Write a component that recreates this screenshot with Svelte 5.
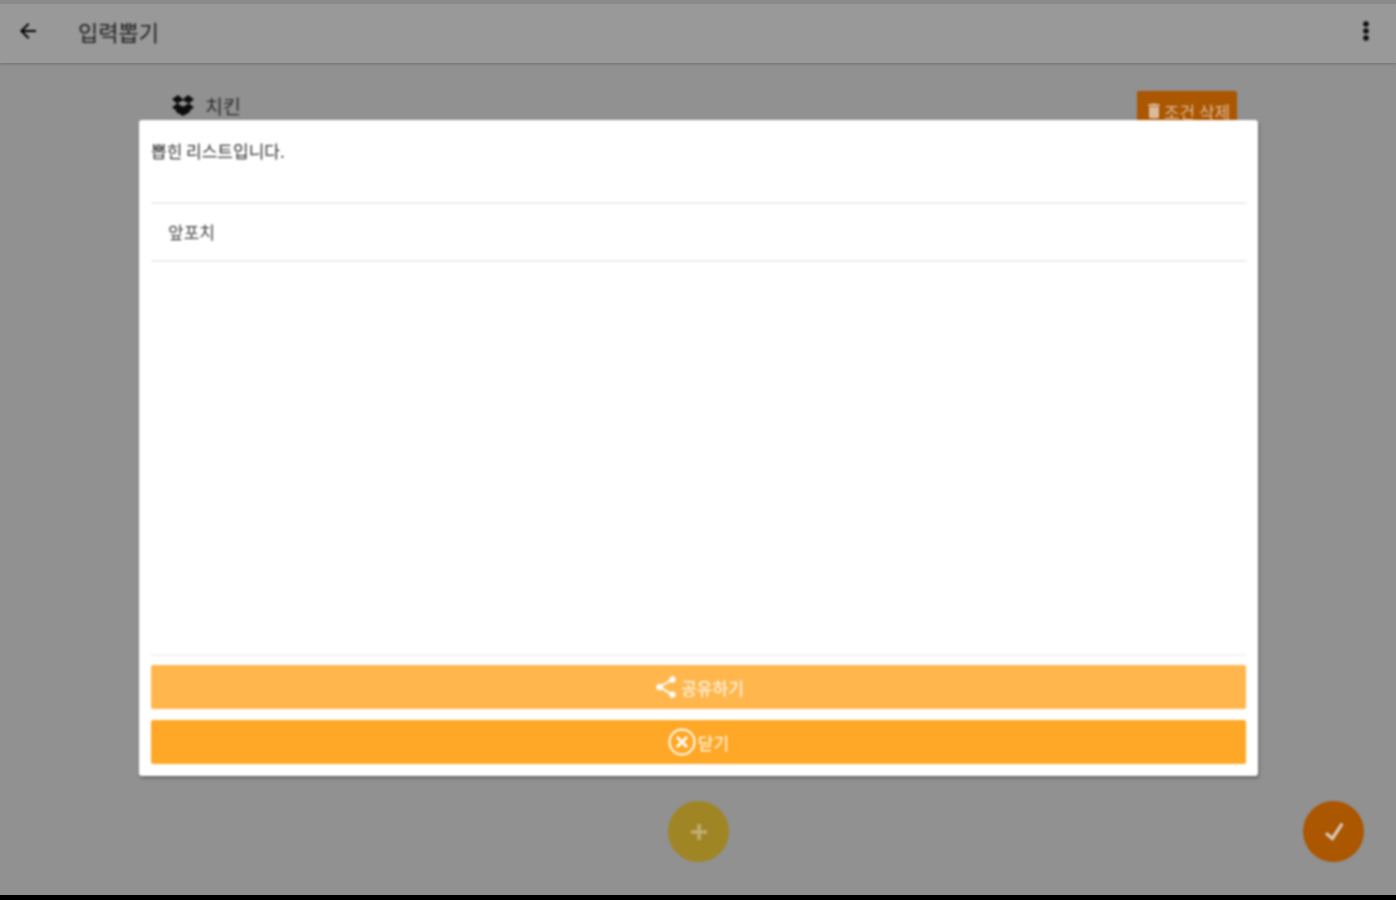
<script>
  const picked = ['앞포치'];
</script>

<div class="page">
  <header class="appbar">
    <svg class="back" viewBox="0 0 24 24" width="24" height="24"><path d="M20 11H7.800l5.600-5.600L12 4l-8 8 8 8 1.400-1.400L7.800 13H20z" /></svg>
    <h1>입력뽑기</h1>
    <svg class="more" viewBox="0 0 24 24" width="24" height="24"><circle cx="12" cy="5" r="2.800" /><circle cx="12" cy="12" r="2.800" /><circle cx="12" cy="19" r="2.800" /></svg>
  </header>

  <main class="content">
    <div class="row">
      <div class="title">
        <svg viewBox="0 0 24 24" width="24" height="24"><path d="M7 2 1 6.200l5 4.200-5 4.200 4 2.600v1.800l7 4 7-4v-1.800l4-2.600-5-4.200 5-4.200L17 2l-5 4.200zM12 7.200l5.500 3.200-5.500 3.400-5.500-3.400z" fill-rule="evenodd" /></svg>
        <span>치킨</span>
      </div>
      <button class="delete">
        <svg viewBox="0 0 24 24" width="20" height="20"><path d="M6 19a2 2 0 0 0 2 2h8a2 2 0 0 0 2-2V7H6zM19 4h-3.500l-1-1h-5l-1 1H5v2h14z" /></svg>
        조건 삭제
      </button>
    </div>

    <button class="fab add" aria-label="추가">
      <svg viewBox="0 0 16 16" width="16" height="16"><path d="M6.200 0h3.600v6.200H16v3.600H9.800V16H6.200V9.800H0V6.200h6.200z" /></svg>
    </button>
    <button class="fab done" aria-label="완료">
      <svg viewBox="0 0 20 20" width="20" height="20"><path d="M17 0.500 19.500 2.500 8.800 19 1 12.500 3 10 8 14z" /></svg>
    </button>

    <section class="dialog">
      <p class="message">뽑힌 리스트입니다.</p>
      <ul>
        {#each picked as item}
          <li>{item}</li>
        {/each}
      </ul>
      <div class="actions">
        <button class="action share">
          <svg viewBox="0 0 24 24" width="26" height="26"><path d="M18 16.100c-.8 0-1.500.3-2 .8l-7.100-4.200c.1-.2.100-.5.100-.7s0-.5-.1-.7L16 7.200c.5.500 1.200.8 2 .8 1.700 0 3-1.300 3-3s-1.300-3-3-3-3 1.300-3 3c0 .2 0 .5.100.7L8 9.800C7.500 9.300 6.800 9 6 9c-1.700 0-3 1.300-3 3s1.300 3 3 3c.8 0 1.500-.3 2-.8l7.100 4.200c-.1.200-.1.400-.1.600 0 1.600 1.300 2.900 3 2.900s3-1.300 3-2.900-1.300-2.900-3-2.900z" /></svg>
          공유하기
        </button>
        <button class="action close">
          <svg viewBox="0 0 28 28" width="28" height="28" fill="none" stroke="#fff"><circle cx="14" cy="14" r="12.500" stroke-width="2" /><path d="m9 9 10 10m0-10L9 19" stroke-width="2.800" /></svg>
          닫기
        </button>
      </div>
    </section>
  </main>

  <div class="navbar"></div>
</div>

<style>
  :global(body) {
    margin: 0;
    background: #000;
  }

  .page {
    display: flex;
    flex-direction: column;
    height: 900px;
    font-family: "Noto Sans CJK KR", "Noto Sans", sans-serif;
    overflow: hidden;
  }

  /* the reference is a soft upscaled capture */
  .appbar > *,
  .row,
  .fab,
  .dialog {
    filter: blur(0.8px);
  }

  .appbar {
    display: flex;
    align-items: center;
    height: 54px;
    flex: none;
    padding: 0 18px 5px 16px;
    background: #999;
    border-top: 4px solid #8a8a8a;
    box-shadow: 0 1px 3px #6f6f6f;
    position: relative;
    z-index: 1;
  }

  .appbar h1 {
    margin: 0 0 0 38px;
    font-size: 22px;
    font-weight: 400;
    color: #222;
  }

  .more {
    margin-left: auto;
    fill: #0d0d0d;
  }

  .content {
    flex: 1;
    position: relative;
    background: #919191;
  }

  .row {
    display: flex;
    justify-content: space-between;
    padding: 28px 159px 0 171px;
  }

  .title {
    display: flex;
    align-items: center;
    align-self: flex-start;
    gap: 10px;
    height: 28px;
    font-size: 19.500px;
    color: #2c2c2c;
  }

  .title svg {
    fill: #0d0d0d;
  }

  .delete {
    display: flex;
    align-items: center;
    justify-content: center;
    width: 100px;
    height: 48px;
    border: 0;
    border-radius: 2px;
    padding: 0 0 8px;
    background: #ab5600;
    color: #dcbb9c;
    font: inherit;
    font-size: 17px;
  }

  .delete svg {
    fill: #dcbb9c;
  }

  .fab {
    position: absolute;
    bottom: 33px;
    width: 61px;
    height: 61px;
    border: 0;
    border-radius: 50%;
    padding: 0;
    display: flex;
    align-items: center;
    justify-content: center;
  }

  .add {
    left: 668px;
    background: #a08524;
    fill: #bfae72;
  }

  .done {
    right: 32px;
    background: #ab5600;
    fill: #d9c9bb;
  }

  .dialog {
    position: absolute;
    left: 139px;
    top: 57px;
    width: 1119px;
    height: 656px;
    box-sizing: border-box;
    padding: 12px;
    display: flex;
    flex-direction: column;
    background: #fff;
    border-radius: 3px;
    box-shadow: 1px 2px 3px #5f5f5f;
  }

  .message {
    margin: 0;
    height: 70px;
    border-bottom: 2px solid #eee;
    font-size: 17px;
    line-height: 38px;
    color: #333;
  }

  ul {
    flex: 1;
    margin: 0;
    padding: 0;
    list-style: none;
  }

  li {
    height: 56px;
    padding-left: 17px;
    border-bottom: 2px solid #eee;
    font-size: 17px;
    line-height: 56px;
    color: #444;
  }

  .actions {
    display: flex;
    flex-direction: column;
    gap: 11px;
    padding-top: 9px;
    border-top: 2px solid #f3f3f3;
  }

  .action {
    display: flex;
    align-items: center;
    justify-content: center;
    height: 44px;
    border: 0;
    border-radius: 2px;
    padding: 0;
    color: #fff;
    font: inherit;
    font-size: 17px;
  }

  .action svg {
    margin-right: 2px;
  }

  .share {
    background: #ffb74d;
    fill: #fff;
  }

  .close {
    background: #ffa726;
  }

  .navbar {
    height: 5px;
    flex: none;
    background: #000;
  }
</style>
